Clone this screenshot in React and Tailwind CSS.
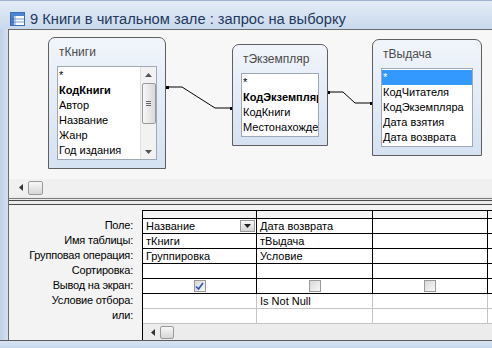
import React from 'react';

const font = "font-['Liberation_Sans',Arial,sans-serif]";

const gridRows = [
  { label: 'Поле:', cells: ['Название', 'Дата возврата', '', ''], dropdown: true },
  { label: 'Имя таблицы:', cells: ['тКниги', 'тВыдача', '', ''] },
  { label: 'Групповая операция:', cells: ['Группировка', 'Условие', '', ''] },
  { label: 'Сортировка:', cells: ['', '', '', ''] },
  { label: 'Вывод на экран:', checks: [true, false, false, false] },
  { label: 'Условие отбора:', cells: ['', 'Is Not Null', '', ''], light: true },
  { label: 'или:', cells: ['', '', '', ''], light: true },
];

const colWidths = ['w-[114px]', 'w-[116px]', 'w-[115px]', 'w-[30px]'];

const QueryIcon = () => (
  <svg width="15" height="14" viewBox="0 0 15 14" className="shrink-0">
    <rect x="0.5" y="0.5" width="14" height="13" fill="#ffffff" stroke="#3a6fb5" />
    <rect x="1" y="1" width="13" height="3" fill="#4c86d0" />
    <path d="M1 7h13M1 10h13M5 4v9" stroke="#6c9bd8" strokeWidth="1" />
    <rect x="0" y="4" width="4" height="9" fill="#2f62ad" opacity="0.8" />
  </svg>
);

const ScrollArrow = () => (
  <svg width="5" height="7" viewBox="0 0 5 7">
    <path d="M4 0L0 3.5L4 7Z" fill="#333" />
  </svg>
);

const Thumb = ({ className }) => (
  <div
    className={`border border-[#9a9a9a] rounded-[2px] bg-gradient-to-b from-[#f7f7f7] to-[#d6d6d6] ${className}`}
  />
);

// table box on the relationship canvas
const TableBox = ({ pos, title, fields, scroll, selected }) => (
  <div
    className={`absolute ${pos} flex flex-col border border-[#5f5f5f] rounded-t-[7px] bg-gradient-to-b from-[#f1f5fb] to-[#d5e2f2] px-[8px] pb-[8px]`}
  >
    <div className="h-[28px] flex items-center pl-[2px] text-[12px] text-[#4a4a4a] shrink-0">{title}</div>
    <div className="flex-1 flex border border-[#9fa9b6] bg-white overflow-hidden">
      <div className="flex-1 flex flex-col overflow-hidden pt-px">
        {fields.map((f, i) => (
          <div
            key={i}
            className={`h-[15px] leading-[15px] pl-px text-[11px] whitespace-nowrap shrink-0 ${
              f.bold ? 'font-bold' : ''
            } ${selected === i ? 'bg-[#3399ff] text-white' : 'text-black'}`}
          >
            {f.name}
          </div>
        ))}
      </div>
      {scroll && (
        <div className="w-[16px] flex flex-col items-center bg-[#f2f2f2] border-l border-[#e0e0e0] shrink-0">
          <div className="h-[16px] flex items-center justify-center">
            <svg width="7" height="4" viewBox="0 0 7 4"><path d="M0 4L3.5 0L7 4Z" fill="#555" /></svg>
          </div>
          <div className="w-[14px] h-[41px] border border-[#9a9a9a] rounded-[2px] bg-gradient-to-r from-[#f7f7f7] to-[#d9d9d9] flex flex-col items-center justify-center gap-px">
            <div className="w-[5px] h-px bg-[#666]" />
            <div className="w-[5px] h-px bg-[#666]" />
            <div className="w-[5px] h-px bg-[#666]" />
          </div>
          <div className="flex-1" />
          <div className="h-[14px] flex items-center justify-center">
            <svg width="7" height="4" viewBox="0 0 7 4"><path d="M0 0L3.5 4L7 0Z" fill="#555" /></svg>
          </div>
        </div>
      )}
    </div>
  </div>
);

const CheckBox = ({ checked }) => (
  <div className="w-[12px] h-[12px] border border-[#9a9a9a] bg-gradient-to-br from-[#d8d8d8] to-[#f8f8f8] flex items-center justify-center">
    {checked && (
      <svg width="9" height="9" viewBox="0 0 9 9">
        <path d="M1 4.5L3.5 7L8 1" stroke="#2a55b5" strokeWidth="1.6" fill="none" />
      </svg>
    )}
  </div>
);

const App = () => {
  return (
    <div className={`w-[492px] h-[348px] overflow-hidden flex flex-col bg-[#c9d8ec] ${font}`}>
      {/* title bar */}
      <div className="h-[29px] shrink-0 flex items-center gap-[5px] pl-[10px] pt-[8px] bg-gradient-to-b from-[#e4ecf6] to-[#c9d9ee] border-t border-[#9fb2cc]">
        <QueryIcon />
        <span className="text-[14.7px] text-[#1e395b] whitespace-nowrap">9 Книги в читальном зале : запрос на выборку</span>
      </div>

      <div className="flex-1 flex min-h-0">
        <div className="w-[8px] shrink-0 bg-gradient-to-r from-[#bfd1e8] to-[#d3e0f0]" />
        <div className="flex-1 flex flex-col border-l border-t border-[#6b6b6b] min-w-0">
          {/* relationship canvas */}
          <div className="relative h-[149px] shrink-0 bg-[#f7f7f7] overflow-hidden">
            <svg className="absolute left-0 top-0" width="483" height="149">
              <path d="M158 57H173L206 78H223" stroke="#000" fill="none" />
              <rect x="157" y="56" width="3" height="3" fill="#000" />
              <rect x="221" y="77" width="3" height="3" fill="#000" />
              <path d="M319 62H334L346 73H363" stroke="#000" fill="none" />
              <rect x="318" y="61" width="3" height="3" fill="#000" />
              <rect x="361" y="72" width="3" height="3" fill="#000" />
            </svg>
            <TableBox
              pos="left-[39px] top-[7px] w-[118px] h-[132px]"
              title="тКниги"
              scroll
              fields={[
                { name: '*' },
                { name: 'КодКниги', bold: true },
                { name: 'Автор' },
                { name: 'Название' },
                { name: 'Жанр' },
                { name: 'Год издания' },
              ]}
            />
            <TableBox
              pos="left-[223px] top-[14px] w-[96px] h-[102px]"
              title="тЭкземпляр"
              fields={[
                { name: '*' },
                { name: 'КодЭкземпляр', bold: true },
                { name: 'КодКниги' },
                { name: 'Местонахождение' },
              ]}
            />
            <TableBox
              pos="left-[363px] top-[9px] w-[110px] h-[117px]"
              title="тВыдача"
              selected={0}
              fields={[
                { name: '*' },
                { name: 'КодЧитателя' },
                { name: 'КодЭкземпляра' },
                { name: 'Дата взятия' },
                { name: 'Дата возврата' },
              ]}
            />
          </div>

          {/* canvas scrollbar */}
          <div className="h-[17px] shrink-0 flex items-center bg-[#f0f0f0]">
            <div className="w-[19px] flex justify-end pr-[4px]">
              <ScrollArrow />
            </div>
            <Thumb className="w-[15px] h-[14px]" />
          </div>

          {/* splitter */}
          <div className="h-[9px] shrink-0 flex flex-col bg-[#ececec]">
            <div className="h-[2px]" />
            <div className="h-px bg-[#7a7a7a]" />
            <div className="h-px" />
            <div className="h-px bg-[#4a4a4a]" />
            <div className="h-[3px]" />
            <div className="h-px bg-[#4a4a4a]" />
          </div>

          {/* design grid */}
          <div className="flex-1 flex flex-col pt-[5px] bg-[#f3f3f3] text-[11px] min-h-0">
            <div className="flex flex-1">
              <div className="w-[133px] shrink-0 flex flex-col">
                <div className="h-[8px]" />
                {gridRows.map((r, i) => (
                  <div key={i} className="h-[15px] leading-[15px] text-right pr-[9px] text-black whitespace-nowrap tracking-[-0.2px]">
                    {r.label}
                  </div>
                ))}
              </div>
              <div className="flex-1 flex flex-col border-l border-t border-[#000] overflow-hidden">
                <div className="h-[8px] flex shrink-0">
                  {colWidths.map((w, c) => (
                    <div key={c} className={`${w} shrink-0 border-r border-b border-[#000] bg-[#f4f4f4]`} />
                  ))}
                </div>
                {gridRows.map((r, i) => (
                  <div key={i} className="h-[15px] flex shrink-0">
                    {colWidths.map((w, c) => (
                      <div
                        key={c}
                        className={`${w} shrink-0 flex items-center border-r border-b ${
                          r.light ? 'border-[#c4c4c4]' : 'border-[#000]'
                        } bg-white overflow-hidden`}
                      >
                        {r.checks ? (
                          <div className="flex-1 flex justify-center">
                            {c < 3 && <CheckBox checked={r.checks[c]} />}
                          </div>
                        ) : (
                          <>
                            <span className="flex-1 pl-[3px] whitespace-nowrap text-black">{r.cells[c]}</span>
                            {r.dropdown && c === 0 && (
                              <div className="w-[15px] h-[12px] mr-px border border-[#9a9a9a] bg-gradient-to-b from-[#f8f8f8] to-[#d4d4d4] flex items-center justify-center">
                                <svg width="7" height="4" viewBox="0 0 7 4"><path d="M0 0L3.5 4L7 0Z" fill="#222" /></svg>
                              </div>
                            )}
                          </>
                        )}
                      </div>
                    ))}
                  </div>
                ))}
                <div className="flex-1 flex items-center bg-[#ececec]">
                  <div className="w-[17px] flex justify-end pr-[4px]">
                    <ScrollArrow />
                  </div>
                  <Thumb className="w-[14px] h-[13px]" />
                </div>
              </div>
            </div>
          </div>
        </div>
      </div>

      {/* bottom band */}
      <div className="h-[8px] shrink-0 border-t border-[#5a5a5a] bg-gradient-to-b from-[#d8e4f3] to-[#c7d7ec]" />
    </div>
  );
};

export default App;
